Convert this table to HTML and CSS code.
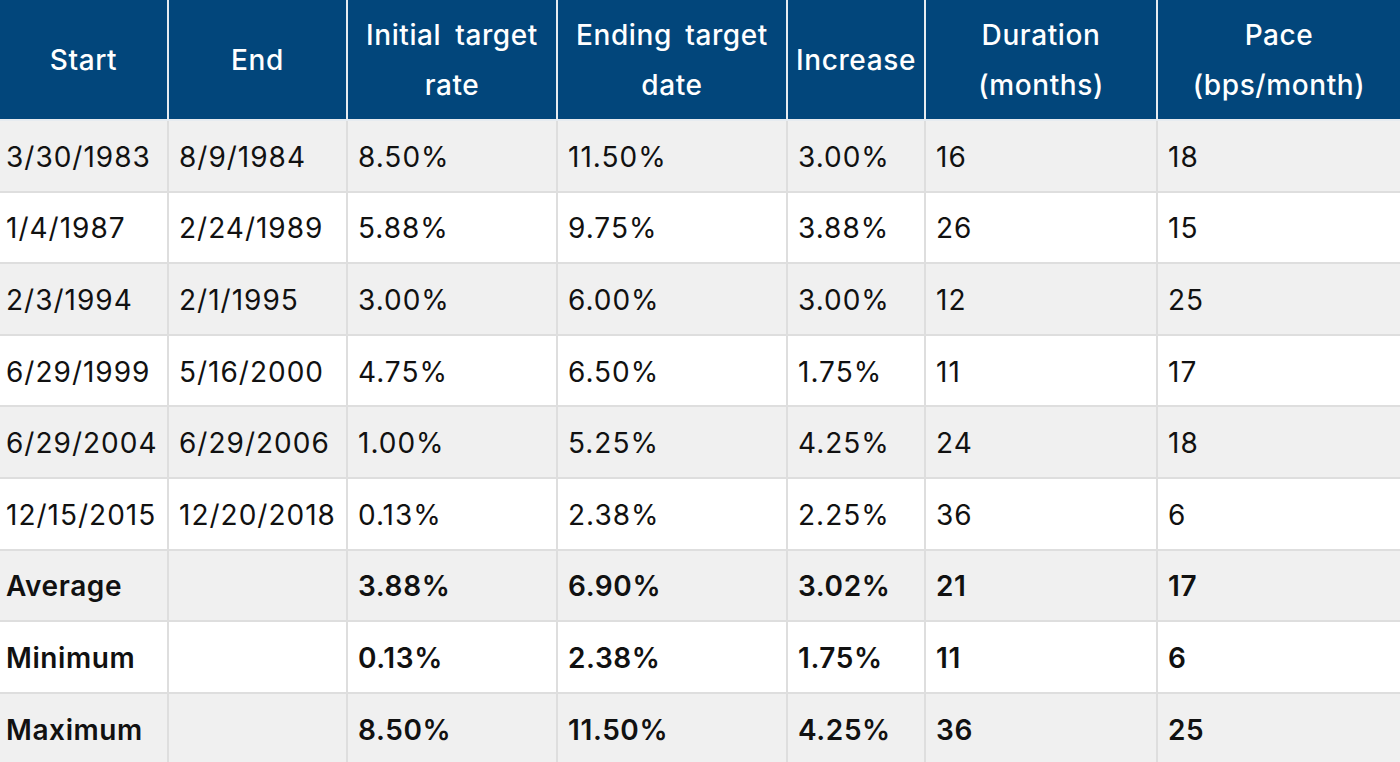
FILE: index.html
```html
<!DOCTYPE html>
<html lang="en">
<head>
<meta charset="utf-8">
<title>Fed tightening cycles</title>
<link rel="stylesheet" href="styles.css">
</head>
<body>
<table class="cycles">
  <colgroup>
    <col class="c1"><col class="c2"><col class="c3"><col class="c4"><col class="c5"><col class="c6"><col class="c7">
  </colgroup>
  <thead>
    <tr>
      <th>Start</th>
      <th>End</th>
      <th class="just">Initial target rate</th>
      <th class="just">Ending target date</th>
      <th>Increase</th>
      <th>Duration (months)</th>
      <th>Pace (bps/month)</th>
    </tr>
  </thead>
  <tbody>
    <tr><td class="first">3/30/1983</td><td>8/9/1984</td><td>8.50%</td><td>11.50%</td><td>3.00%</td><td>16</td><td>18</td></tr>
    <tr><td class="first">1/4/1987</td><td>2/24/1989</td><td>5.88%</td><td>9.75%</td><td>3.88%</td><td>26</td><td>15</td></tr>
    <tr><td class="first">2/3/1994</td><td>2/1/1995</td><td>3.00%</td><td>6.00%</td><td>3.00%</td><td>12</td><td>25</td></tr>
    <tr><td class="first">6/29/1999</td><td>5/16/2000</td><td>4.75%</td><td>6.50%</td><td>1.75%</td><td>11</td><td>17</td></tr>
    <tr><td class="first">6/29/2004</td><td>6/29/2006</td><td>1.00%</td><td>5.25%</td><td>4.25%</td><td>24</td><td>18</td></tr>
    <tr><td class="first">12/15/2015</td><td>12/20/2018</td><td>0.13%</td><td>2.38%</td><td>2.25%</td><td>36</td><td>6</td></tr>
    <tr class="stat"><td class="first">Average</td><td></td><td>3.88%</td><td>6.90%</td><td>3.02%</td><td>21</td><td>17</td></tr>
    <tr class="stat"><td class="first">Minimum</td><td></td><td>0.13%</td><td>2.38%</td><td>1.75%</td><td>11</td><td>6</td></tr>
    <tr class="stat"><td class="first">Maximum</td><td></td><td>8.50%</td><td>11.50%</td><td>4.25%</td><td>36</td><td>25</td></tr>
  </tbody>
</table>
</body>
</html>
```

FILE: styles.css
```css
html, body {
  margin: 0;
  padding: 0;
  background: #ffffff;
}

body {
  font-family: Inter, "Liberation Sans", "Noto Sans", sans-serif;
  color: #111111;
  overflow: hidden;
}

.cycles {
  width: 1400px;
  table-layout: fixed;
  border-collapse: collapse;
  border-spacing: 0;
}

.c1 { width: 168px; }
.c2 { width: 179px; }
.c3 { width: 210px; }
.c4 { width: 230px; }
.c5 { width: 138px; }
.c6 { width: 232px; }
.c7 { width: 243px; }

.cycles th {
  height: 119px;
  padding: 0 8px;
  background: #02467b;
  color: #ffffff;
  font-size: 28px;
  font-weight: 500;
  letter-spacing: 0.6px;
  line-height: 50px;
  text-align: center;
  vertical-align: middle;
  border-right: 2px solid #e6ebf0;
  border-bottom: 2px solid #e6ebf0;
}

.cycles th.just {
  padding: 0 18px;
  text-align: justify;
  text-align-last: center;
}

.cycles th:last-child,
.cycles td:last-child {
  border-right: none;
}

.cycles td {
  height: 67.6px;
  padding: 2px 10px 0;
  font-size: 28px;
  font-weight: 400;
  letter-spacing: 1px;
  white-space: nowrap;
  vertical-align: middle;
  border-right: 2px solid #dedede;
  border-bottom: 2px solid #dedede;
}

.cycles td.first {
  padding-left: 6px;
  padding-right: 0;
}

.cycles tbody tr:nth-child(odd) td {
  background: #f0f0f0;
}

.cycles tbody tr:nth-child(even) td {
  background: #ffffff;
}

.cycles tr.stat td {
  font-weight: 600;
  letter-spacing: 0.6px;
}
```
